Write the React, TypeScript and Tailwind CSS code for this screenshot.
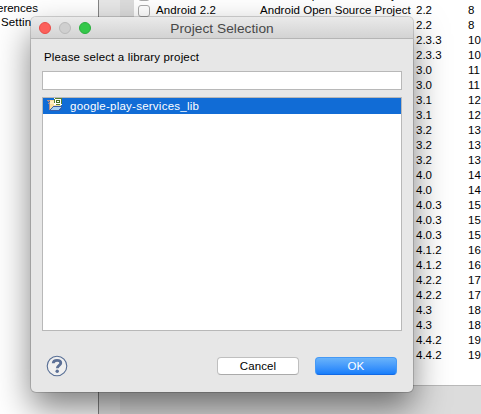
const rows: [string, string][] = [
  ["2.2", "8"], ["2.2", "8"], ["2.3.3", "10"], ["2.3.3", "10"],
  ["3.0", "11"], ["3.0", "11"], ["3.1", "12"], ["3.1", "12"],
  ["3.2", "13"], ["3.2", "13"], ["3.2", "13"], ["4.0", "14"],
  ["4.0", "14"], ["4.0.3", "15"], ["4.0.3", "15"], ["4.0.3", "15"],
  ["4.1.2", "16"], ["4.1.2", "16"], ["4.2.2", "17"], ["4.2.2", "17"],
  ["4.3", "18"], ["4.3", "18"], ["4.4.2", "19"], ["4.4.2", "19"],
];

function ProjectIcon() {
  return (
    <svg className="block h-4 w-4 shrink-0" viewBox="0 0 16 16" shapeRendering="crispEdges">
      <path d="M3 2h4v1h7v6h-3v3H2V4h1z" fill="#f9dfa0" />
      <path d="M0 2h3v1H0zM1 3h1v1H1zM1 5h1v1H1zM2 4h1v8H2z" fill="#b98f83" />
      <path d="M3 3h4v3H3z" fill="#ffefc0" />
      <path d="M6 8h9v2h-1v2h-1v1H3v-2h1v-1h1V9h1z" fill="#3a5ea8" />
      <path d="M6 9h8v1h-1v1h-1v1H4v-1h1v-1h1z" fill="#a9d2f3" />
      <path d="M7 0h8v7H7z" fill="#fff" />
      <path d="M8 0h6v1H8zM14 0h1v6h-1zM7 1h1v4H7zM9 6h4v1H9z" fill="#5b8130" />
      <path d="M9 2h4v3H9zM10 3v1h2V3z" fill="#477022" fillRule="evenodd" />
    </svg>
  );
}

function HelpIcon() {
  return (
    <svg className="block h-[22px] w-[22px]" viewBox="0 0 22 22" fill="none">
      <circle cx="11" cy="11" r="9.8" fill="#f0f0f0" stroke="#566d94" strokeWidth="1.1" />
      <path d="M7.2 8.3C7.3 6.1 8.8 5.3 11 5.3c2.4 0 3.8 1 3.8 2.7 0 2.5-3.5 2.3-3.5 5.3" stroke="#5c7096" strokeWidth="2.8" />
      <circle cx="11.2" cy="16.3" r="1.7" fill="#5c7096" />
    </svg>
  );
}

export default function App() {
  return (
    <div className="relative h-[414px] w-[481px] overflow-hidden bg-white font-['Liberation_Sans',Arial,sans-serif] text-[11.5px] leading-[15px] text-black">
      <div className="flex h-full">
        <aside className="w-[98px] shrink-0 whitespace-nowrap">
          <div className="-ml-[3px] h-[15px] pt-px">erences</div>
          <div className="pl-px tracking-[0.15px]">Settin</div>
        </aside>
        <div className="w-[22px] shrink-0 border-l border-[#858585] bg-[#e7e7e7]" />
        <div className="flex min-w-0 grow flex-col bg-[#dcdcdc]">
          <main className="ml-[14px] h-[386px] border-b border-[#b9b9b9] bg-white">
            <div className="flex h-[3px] items-end overflow-hidden whitespace-nowrap">
              <div className="w-[22px] shrink-0 pb-0.5 pl-1">
                <div className="h-3 w-3 rounded-[3px] border border-[#aaa] bg-white" />
              </div>
              <div className="ml-[104px]">Android Open Source Project</div>
            </div>
            {rows.map(([version, api], i) => (
              <div className="flex h-[15px] items-center whitespace-nowrap" key={i}>
                <div className="w-[22px] shrink-0 pl-1">
                  {i === 0 && <div className="h-3 w-3 rounded-[3px] border border-[#aaa] bg-white" />}
                </div>
                <div className="w-[104px] shrink-0 tracking-[0.1px]">{i === 0 && "Android 2.2"}</div>
                <div className="w-[156px] shrink-0 tracking-[0.04px]">{i === 0 && "Android Open Source Project"}</div>
                <div className="w-[52px] shrink-0">{version}</div>
                <div className="shrink-0">{api}</div>
              </div>
            ))}
          </main>
        </div>
      </div>

      <section className="absolute left-[31px] top-[17px] flex h-[375px] w-[382px] flex-col rounded-[5px] bg-[#e7e7e7] shadow-[0_0_0_1px_rgba(0,0,0,0.16),0_16px_34px_rgba(0,0,0,0.5)]">
        <header className="relative flex h-[22px] shrink-0 items-center justify-center rounded-t-[5px] border-b border-[#b5b5b5] bg-linear-to-b from-[#eaeaea] to-[#d3d3d3]">
          <div className="absolute left-2 top-[5px] flex gap-2">
            <span className="h-3 w-3 rounded-full border border-[#e94b46] bg-[#fc605b]" />
            <span className="h-3 w-3 rounded-full border border-[#bababa] bg-[#cfcfcf]" />
            <span className="h-3 w-3 rounded-full border border-[#28ae3c] bg-[#34c84a]" />
          </div>
          <h1 className="pt-px text-[13.7px] tracking-[0.05px] text-[#484848]">Project Selection</h1>
        </header>
        <div className="flex grow flex-col px-[11px]">
          <label className="mt-[11px] h-[21px] pl-0.5 tracking-[0.16px]">Please select a library project</label>
          <div className="h-[19px] shrink-0 border border-[#b8b8b8] bg-white" />
          <div className="mt-[7px] h-[234px] shrink-0 border border-[#b8b8b8] bg-white">
            <div className="flex h-4 items-center bg-[#116cd6] pl-1 tracking-[0.24px] text-white">
              <ProjectIcon />
              <span className="pl-[7px] pt-px">google-play-services_lib</span>
            </div>
          </div>
          <footer className="flex pt-6 text-center tracking-[0.1px]">
            <div className="ml-1"><HelpIcon /></div>
            <button className="ml-[149px] mt-[2px] h-[18px] w-[82px] rounded-[4px] border border-[#bfbfbf] border-b-[#aaa] bg-white leading-[16px]">Cancel</button>
            <button className="ml-4 mt-[2px] h-[18px] w-[82px] rounded-[4px] border border-[#4599f5] border-b-[#1269e5] bg-linear-to-b from-[#69b3fa] to-[#167efb] leading-[16px] text-white">OK</button>
          </footer>
        </div>
      </section>
    </div>
  );
}
